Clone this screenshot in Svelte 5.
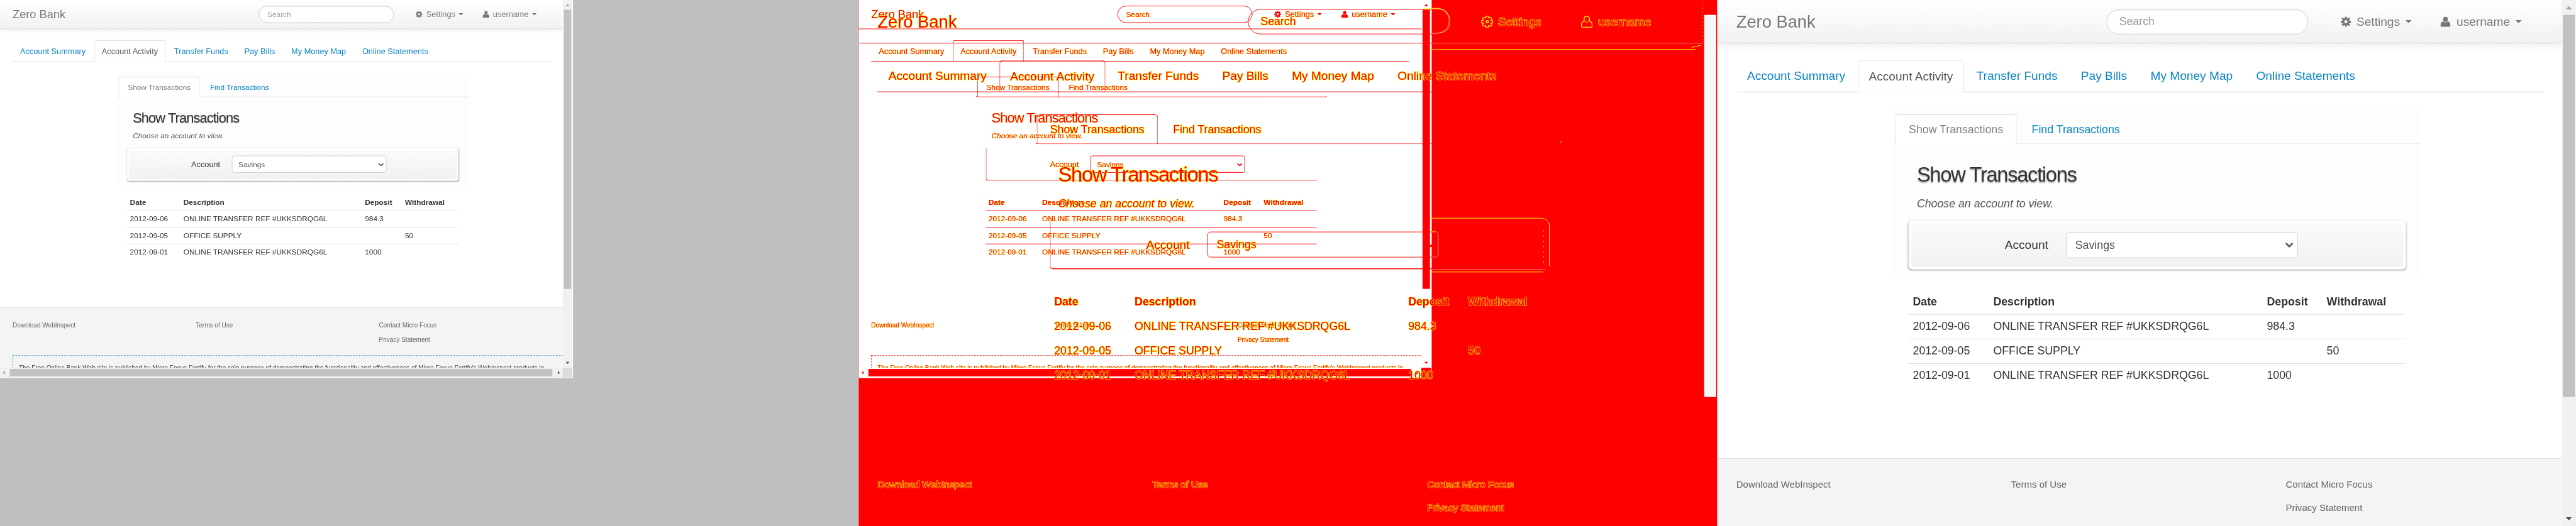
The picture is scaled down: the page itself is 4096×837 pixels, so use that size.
<script>
  const mainTabs = ['Account Summary', 'Account Activity', 'Transfer Funds', 'Pay Bills', 'My Money Map', 'Online Statements'];
  const rows = [
    ['2012-09-06', 'ONLINE TRANSFER REF #UKKSDRQG6L', '984.3', ''],
    ['2012-09-05', 'OFFICE SUPPLY', '', '50'],
    ['2012-09-01', 'ONLINE TRANSFER REF #UKKSDRQG6L', '1000', '']
  ];
</script>

{#snippet page(kind, small)}
  <div class="page {kind}" class:small class:large={!small}>
    <div class="view">
      <header>
        <span class="brand">Zero Bank</span>
        <div class="search"><span>Search</span></div>
        <div class="menu settings">
          <svg class="ico" viewBox="0 0 24 24">
            <g fill="none" stroke="currentColor">
              <circle cx="12" cy="12" r="6.2" stroke-width="5" />
              <path d="M12 0v5M12 19v5M0 12h5M19 12h5M3.5 3.5l4 4M16.5 16.5l4 4M3.5 20.5l4-4M16.5 7.5l4-4" stroke-width="4.6" />
            </g>
          </svg>
          <span>Settings</span>
          <i class="caret"></i>
        </div>
        <div class="menu user">
          <svg class="ico" viewBox="0 0 24 24">
            <ellipse cx="12" cy="6.2" rx="5.4" ry="6.2" fill="currentColor" />
            <path d="M6.6 11.2Q12 16 17.4 11.2Q23.4 13 23.4 20V21.6Q23.4 24 20.8 24H3.2Q.6 24 .6 21.6V20Q.6 13 6.6 11.2Z" fill="currentColor" />
          </svg>
          <span>username</span>
          <i class="caret"></i>
        </div>
      </header>
      <nav class="tabs">
        {#each mainTabs as tab, i}
          <span class="tab" class:active={i === 1}>{tab}</span>
        {/each}
      </nav>
      <section class="panel">
        <nav class="subtabs">
          <span class="subtab active">Show Transactions</span>
          <span class="subtab">Find Transactions</span>
        </nav>
        <h2>Show Transactions</h2>
        <p>Choose an account to view.</p>
        <div class="well">
          <div class="inner">
            <span class="label">Account</span>
            <div class="select">
              <span>Savings</span>
              <svg viewBox="0 0 18 11"><path d="M1.5 1.5L9 8.7L16.5 1.5" fill="none" stroke="currentColor" stroke-width="3.6" /></svg>
            </div>
          </div>
        </div>
      </section>
      <div class="table">
        <div class="row head"><b>Date</b><b>Description</b><b>Deposit</b><b>Withdrawal</b></div>
        {#each rows as r}
          <div class="row">{#each r as c}<span>{c}</span>{/each}</div>
        {/each}
      </div>
      <footer>
        <div class="cols">
          <div>Download WebInspect</div>
          <div>Terms of Use</div>
          <div>Contact Micro Focus<br />Privacy Statement</div>
        </div>
        {#if small}
          <div class="notice">The Free Online Bank Web site is published by Micro Focus Fortify for the sole purpose of demonstrating the functionality and effectiveness of Micro Focus Fortify's WebInspect products in</div>
        {/if}
      </footer>
    </div>
    <div class="vbar">
      <i class="up"></i>
      <div class="thumb"></div>
      <i class="down"></i>
    </div>
    {#if small}
      <div class="hbar"><i class="lf"></i><div class="hthumb"></div><i class="rt"></i></div>
      <div class="corner"></div>
    {/if}
  </div>
{/snippet}

<div class="window">
  <div class="stage">
    <div class="col grey">{@render page('plain', true)}</div>
    <div class="col red">
      <div class="paper"></div>
      {@render page('mask', true)}
      {@render page('mask', false)}
      <svg class="edges" viewBox="0 0 1500 920" fill="none" stroke-width="1">
        <path stroke="#fff" d="M1001 75.500H1475M1001 470.500H1200M1001 58.500H1010Q1031 56 1031.500 37Q1031 17 1012 15.500H1001M1001 449.500H1008Q1012.500 449 1012.500 444V410Q1012.500 405.500 1008 405.500H1001" />
        <path stroke="#ff0" d="M985 86.500H1462M1455 83L1472 79M985 381.500H1193Q1206 383 1206.500 394V465M985 475.500H1196M985 14.500H1014Q1032 18 1033 37Q1032 54 1018 58M985 17.500H998M985 404.500H1009M1224 251l5 -5" />
        <path stroke="#ff0" stroke-dasharray="1 5" d="M1474.500 2v74" />
        <path stroke="#ff0" stroke-dasharray="2 7" d="M1196.500 403V460" />
      </svg>
    </div>
    <div class="col">{@render page('plain', false)}</div>
  </div>
</div>

<style>
  :global(body) { margin: 0; background: #fff; overflow: hidden; }
  .window { width: 4096px; height: 837px; overflow: hidden; }
  .stage {
    width: 4500px; height: 920px; display: grid; grid-template-columns: repeat(3, 1500px);
    transform: scale(0.910222); transform-origin: 0 0;
    font-family: "Liberation Sans", Arial, sans-serif; white-space: nowrap;
  }
  .col { display: grid; align-items: start; justify-items: start; height: 920px; overflow: hidden; background: #fff; }
  .col > :global(*) { grid-area: 1 / 1; }
  .grey { background: #bfbfbf; }
  .red { background: #f00; }
  .paper { width: 1001px; height: 661px; background: #fff; }
  .edges { width: 1500px; height: 920px; }

  .page { display: grid; position: relative; color: #333; --line: #ddd; --link: #0a84c8; }
  .small {
    --u: 1; width: 1001px; height: 661px; grid-template: 643px 17px / 983px 17px;
    --sgap: 430px; --sw: 236px; --sh: 30px; --tabgap: 19px; --tabh: 38px; --pgap: 20px; --ppad: 6px; --subh: 36px;
    --hgap: 17.700px; --cgap: 4.800px; --wgap: 10.500px; --wh: 57px; --pend: 8px; --tgap: 15px; --rowh: 29px;
    --fgap: 82px; --fpad: 17.200px; --fline: 26px; --pl: 204px; --pw: 615px; --wl: 18px;
    --c1: 93.500px; --c2: 317px; --c3: 70px; --selx: 183px; --selw: 270px;
    --thumb-h: 488px; --bar-gap: 17px;
  }
  .large {
    --u: 1.5; width: 1500px; height: 920px; grid-template: 920px / 1475px 25px;
    --sgap: 647px; --sw: 351.500px; --sh: 44px; --tabgap: 29px; --tabh: 56px; --pgap: 31px; --ppad: 8px; --subh: 52px;
    --hgap: 26.800px; --cgap: 8.100px; --wgap: 15.100px; --wh: 85px; --pend: 15px; --tgap: 20px; --rowh: 43px;
    --fgap: 123px; --fpad: 25.300px; --fline: 40px; --pl: 306.500px; --pw: 922px; --wl: 27.500px;
    --c1: 140.500px; --c2: 478px; --c3: 104.500px; --selx: 274px; --selw: 405px;
    --thumb-h: 668px; --bar-gap: 25px;
  }
  .plain.small { background: #fff; }
  .view { overflow: hidden; display: flex; flex-direction: column; position: relative; }

  header {
    flex: none; height: calc(var(--u) * 50px); display: flex; align-items: center; padding-left: calc(var(--u) * 22px);
    border-bottom: 1px solid #d4d4d4; background: linear-gradient(#fff, #f1f1f1);
    box-shadow: 0 calc(var(--u) * 1px) calc(var(--u) * 10px) rgba(0, 0, 0, .1); color: #777; font-size: calc(var(--u) * 14px);
    text-shadow: 0 1px 0 #fff;
  }
  .brand { width: var(--sgap); font-size: calc(var(--u) * 20px); }
  .search {
    width: var(--sw); height: var(--sh); box-sizing: border-box; border: 1px solid #ccc; border-radius: calc(var(--u) * 15px);
    background: #fff; display: flex; align-items: center; padding-left: calc(var(--u) * 14px); font-size: calc(var(--u) * 13px); color: #999;
    box-shadow: inset 0 1px calc(var(--u) * 1px) rgba(0, 0, 0, .075);
  }
  .menu { display: flex; align-items: center; }
  .settings { margin-left: calc(var(--u) * 38px); width: calc(var(--u) * 116.500px); }
  .menu span { margin-left: calc(var(--u) * 6.700px); }
  .ico { width: calc(var(--u) * 12px); height: calc(var(--u) * 12px); }
  .caret { width: calc(var(--u) * 8px); height: calc(var(--u) * 4px); margin-left: calc(var(--u) * 6px); background: currentColor; clip-path: polygon(0 0, 100% 0, 50% 100%); }

  .tabs {
    flex: none; display: flex; gap: calc(var(--u) * 2px); margin: var(--tabgap) calc(var(--u) * 21px) 0 calc(var(--u) * 22px);
    height: var(--tabh); box-sizing: border-box; border-bottom: 1px solid var(--line); font-size: calc(var(--u) * 14px); color: var(--link);
  }
  .tab, .subtab { box-sizing: border-box; height: 100%; display: flex; align-items: center; border: 1px solid transparent; border-bottom: 0; }
  .tab { padding: 0 calc(var(--u) * 12px); }
  .small .tab { padding: 0 12.150px; }
  .tab.active, .subtab.active { height: calc(100% + 1px); border-color: var(--line); border-radius: calc(var(--u) * 4px) calc(var(--u) * 4px) 0 0; background: #fff; color: #555; }

  .panel { flex: none; margin: var(--pgap) 0 0 var(--pl); width: var(--pw); padding: var(--ppad) 0 var(--pend); background: #fdfdfd; }
  .subtabs {
    display: flex; gap: calc(var(--u) * 2px); height: var(--subh); box-sizing: border-box; padding-left: calc(var(--u) * 2.300px);
    border: solid transparent; border-width: 0 1px 1px; border-bottom-color: var(--line); border-radius: 0 0 calc(var(--u) * 4px) calc(var(--u) * 4px);
    font-size: calc(var(--u) * 13px); color: var(--link);
  }
  .subtab { padding: 0 calc(var(--u) * 15px); }
  .subtab.active { color: #808080; }
  h2 { margin: var(--hgap) 0 0 calc(var(--u) * 28px); font-size: calc(var(--u) * 24px); line-height: calc(var(--u) * 36px); font-weight: 400; letter-spacing: calc(var(--u) * -1px); text-shadow: 0 calc(var(--u) * 1px) calc(var(--u) * 1.500px) rgba(0, 0, 0, .35); }
  p { margin: var(--cgap) 0 0 calc(var(--u) * 28px); font-size: calc(var(--u) * 13px); line-height: calc(var(--u) * 20px); font-style: italic; color: #555; }
  .well {
    margin: var(--wgap) 0 0 var(--wl); width: calc(var(--u) * 579px); height: var(--wh); box-sizing: border-box; padding: calc(var(--u) * 3px);
    border-radius: calc(var(--u) * 4px); background: #fff; box-shadow: 0 1px calc(var(--u) * 2px) rgba(0, 0, 0, .38);
  }
  .inner { height: 100%; display: flex; align-items: center; border-radius: calc(var(--u) * 3px); background: linear-gradient(#fbfbfb, #f1f1f1); }
  .label { width: calc(var(--u) * 161px); box-sizing: border-box; padding-right: calc(var(--u) * .8px); margin-left: calc(var(--u) * -.5px); text-align: right; font-size: calc(var(--u) * 14px); margin-right: calc(var(--u) * 19.500px); }
  .select {
    width: var(--selw); height: calc(var(--u) * 30px); box-sizing: border-box; border: 1px solid #ccc; border-radius: calc(var(--u) * 4px); background: #fff;
    display: flex; align-items: center; justify-content: space-between; padding: 0 calc(var(--u) * 4px) 0 calc(var(--u) * 10.500px); color: #555; font-size: calc(var(--u) * 13px);
  }
  .select svg { width: calc(var(--u) * 9.500px); height: calc(var(--u) * 5.800px); }

  .table { flex: none; margin: var(--tgap) 0 0 calc(var(--pl) + var(--wl)); width: calc(var(--u) * 578px); font-size: calc(var(--u) * 13px); }
  .row { display: grid; grid-template-columns: var(--c1) var(--c2) var(--c3) 1fr; height: var(--rowh); box-sizing: border-box; border-top: 1px solid var(--trow, #ddd); align-items: center; padding-left: calc(var(--u) * 5px); }
  .head { border-color: transparent; }

  footer { flex: 1 0 auto; margin-top: var(--fgap); border-top: 1px solid #e3e3e3; background: #f4f4f4; padding: var(--fpad) 0 0 calc(var(--u) * 22px); }
  .cols { display: grid; grid-template-columns: calc(var(--u) * 320px) calc(var(--u) * 320px) 1fr; font-size: calc(var(--u) * 11px); line-height: var(--fline); color: #666; }
  .notice { margin-top: 13.800px; border: 1px dashed #1899cc; width: 1100px; height: 60px; padding: 11.600px 0 0 10px; font-size: 11px; letter-spacing: .025px; line-height: 18px; }

  .vbar { background: #f1f1f1; display: flex; flex-direction: column; align-items: center; }
  .vbar i { flex: none; width: calc(var(--u) * 7px); height: calc(var(--u) * 4px); }
  .up { margin: calc(var(--u) * 7px) 0 calc(var(--u) * 6px); background: #a3a3a3; clip-path: polygon(50% 0, 100% 100%, 0 100%); }
  .down { margin: auto 0 calc(var(--u) * 6.700px); background: #505050; clip-path: polygon(0 0, 100% 0, 50% 100%); }
  .thumb { width: calc(var(--u) * 13.500px); height: var(--thumb-h); background: #c1c1c1; }
  .hbar { background: #f1f1f1; display: flex; align-items: center; }
  .hbar i { width: 4px; height: 7px; }
  .lf { margin: 0 8px 0 5px; background: #a3a3a3; clip-path: polygon(100% 0, 100% 100%, 0 50%); }
  .rt { margin-left: 9px; background: #505050; clip-path: polygon(0 0, 100% 50%, 0 100%); }
  .hthumb { width: 948px; height: 13px; background: #c1c1c1; }
  .corner { background: #dcdcdc; }

  .mask { --line: #f00; --link: #f00; }
  .mask, .mask *, .mask .tab.active, .mask .subtab.active { color: #f00; }
  .mask span, .mask b, .mask h2, .mask p, .mask .cols, .mask .notice { -webkit-text-stroke: .6px #ff0; paint-order: stroke fill; text-shadow: none; }
  .mask.large span, .mask.large b, .mask.large p, .mask.large .cols { -webkit-text-stroke-width: 1.300px; }
  .mask.large h2 { -webkit-text-stroke-width: 1.800px; }
  .mask header, .mask footer, .mask .panel, .mask .tab, .mask .subtab, .mask .tab.active, .mask .subtab.active, .mask .search, .mask .select, .mask .well, .mask .inner { background: none; box-shadow: none; }
  .mask header, .mask .search, .mask .select { border-color: #f00; }
  .mask footer { border-color: transparent; }
  .mask .ico { overflow: visible; }
  .mask.large .ico { filter: drop-shadow(1px 0 #ff0) drop-shadow(-1px 0 #ff0) drop-shadow(0 1px #ff0) drop-shadow(0 -1px #ff0); }
  .mask .well { border: solid #f00; border-width: 0 0 1px 1px; border-radius: 0 0 0 calc(var(--u) * 4px); padding: calc(var(--u) * 3px) calc(var(--u) * 3px) calc(var(--u) * 3px - 1px) calc(var(--u) * 3px - 1px); }
  .mask.large .well { border-bottom-width: 2px; }
  .mask.large .row { border-color: transparent; }
  .mask.small .row { --trow: #f00; }
  .mask.small .head { border-color: transparent; }
  .mask .notice { border-color: #f00; }
  .mask .vbar, .mask .hbar { background: none; }
  .mask.small .vbar i, .mask.small .lf, .mask.small .thumb, .mask.small .hthumb, .mask .corner, .mask .rt { background: #f00; }
  .mask.large .thumb { background: #f7f7f7; }
  .mask.large .vbar i { background: #f00; }
</style>
